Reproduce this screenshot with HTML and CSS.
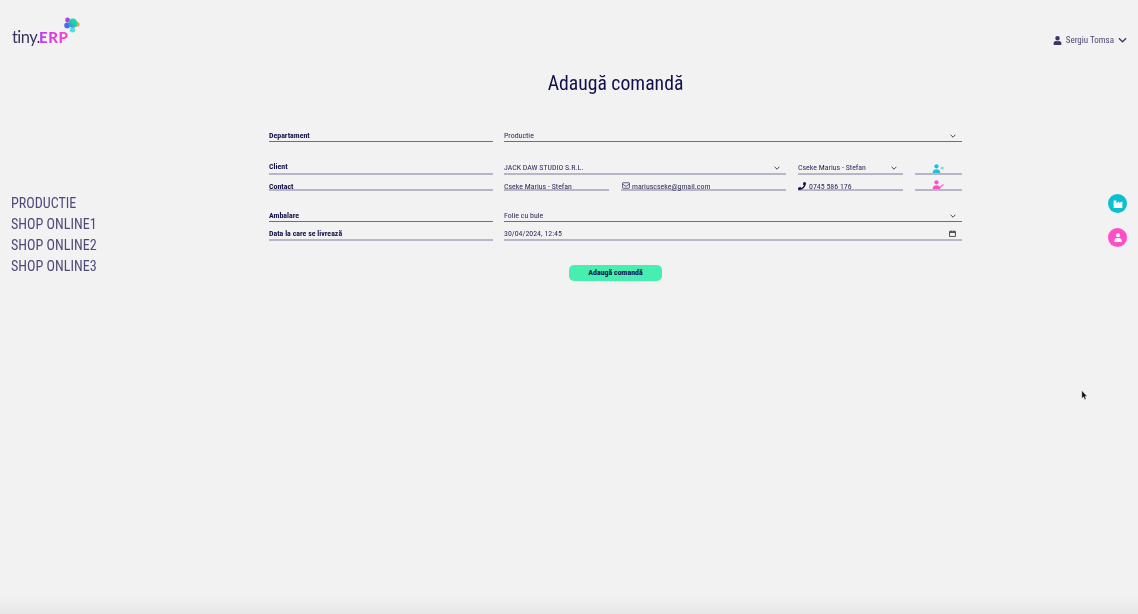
FILE: index.html
```html
<!DOCTYPE html>
<html lang="ro">
<head>
<meta charset="utf-8">
<title>Adaugă comandă</title>
<link rel="stylesheet" href="styles.css">
</head>
<body>
<div class="page">
  <header class="topbar">
    <div class="logo">
      <span class="logo-tiny">tiny.</span><span class="logo-erp">ERP</span>
      <svg class="logo-mark" viewBox="0 0 18 18" aria-hidden="true">
        <defs>
          <linearGradient id="lg" x1="0" y1="1" x2="1" y2="0">
            <stop offset="0" stop-color="#3f7fe8"/>
            <stop offset="0.55" stop-color="#1fd0b0"/>
            <stop offset="1" stop-color="#2bdc96"/>
          </linearGradient>
        </defs>
        <circle cx="4" cy="3.4" r="2.7" fill="#b23fe0"/>
        <circle cx="15" cy="8.5" r="2.6" fill="#f59a4a"/>
        <circle cx="9.5" cy="14.4" r="3" fill="#55dbe0"/>
        <circle cx="3.5" cy="9.5" r="3.2" fill="#4d6ce8"/>
        <circle cx="10" cy="7" r="5.2" fill="url(#lg)"/>
      </svg>
    </div>
    <div class="user">
      <svg class="user-icon" viewBox="0 0 448 512" aria-hidden="true"><path d="M224 256a128 128 0 1 0 0-256 128 128 0 0 0 0 256zm90 32h-17a174 174 0 0 1-146 0h-17C60 288 0 348 0 422v42c0 26 22 48 48 48h352c26 0 48-22 48-48v-42c0-74-60-134-134-134z"/></svg>
      <span>Sergiu Tomsa</span>
      <svg class="user-chev" viewBox="0 0 10 6" aria-hidden="true"><path d="M1 1l4 4 4-4"/></svg>
    </div>
  </header>

  <div class="content">
    <nav class="side">
      <a>PRODUCTIE</a>
      <a>SHOP ONLINE1</a>
      <a>SHOP ONLINE2</a>
      <a>SHOP ONLINE3</a>
    </nav>

    <main class="main">
      <h1>Adaugă comandă</h1>
      <form class="form">
        <div class="row row-dept">
          <div class="label line-dark">Departament</div>
          <div class="field line-dark grow"><span>Productie</span><svg class="chev" viewBox="0 0 10 6"><path d="M1 1l4 4 4-4"/></svg></div>
        </div>

        <div class="row row-client">
          <div class="label line-soft">Client</div>
          <div class="cells">
            <div class="field line-soft c-a"><span>JACK DAW STUDIO S.R.L.</span><svg class="chev" viewBox="0 0 10 6"><path d="M1 1l4 4 4-4"/></svg></div>
            <div class="field line-soft c-b"><span>Cseke Marius - Stefan</span><svg class="chev" viewBox="0 0 10 6"><path d="M1 1l4 4 4-4"/></svg></div>
            <div class="field line-soft c-c">
              <svg class="act" viewBox="0 0 16 11"><circle cx="5.5" cy="2.8" r="2.6" fill="#22bfd6"/><path d="M0.8 11c0-3 1.6-4.6 4.7-4.6s4.7 1.6 4.7 4.6z" fill="#22bfd6"/><circle cx="12.6" cy="5" r="1.9" fill="#7fdde9"/></svg>
            </div>
          </div>
        </div>

        <div class="row row-contact">
          <div class="label line-soft">Contact</div>
          <div class="cells">
            <div class="split">
              <div class="field line-soft c-name"><span>Cseke Marius - Stefan</span></div>
              <div class="field line-soft c-mail">
                <svg class="ico-mail" viewBox="0 0 12 10"><rect x="0.6" y="0.9" width="10.8" height="8.2" rx="1" /><path d="M0.8 2.8L6 6.4l5.2-3.6"/></svg>
                <span>mariuscseke@gmail.com</span>
              </div>
            </div>
            <div class="field line-soft c-b">
              <svg class="ico-phone" viewBox="0 0 512 512"><path d="M493 24L389 0c-11-3-23 3-27 14l-48 112c-4 10-1 21 7 28l61 50a371 371 0 0 1-177 177l-50-61c-7-8-18-11-28-7L15 361C3 366-3 378 0 389l24 104c3 11 12 19 24 19 256 0 464-207 464-464 0-11-8-21-19-24z"/></svg>
              <span>0745 586 176</span>
            </div>
            <div class="field line-soft c-c">
              <svg class="act" viewBox="0 0 16 11"><circle cx="5.5" cy="2.8" r="2.6" fill="#ff4fc8"/><path d="M0.8 11c0-3 1.6-4.6 4.7-4.6s4.7 1.6 4.7 4.6z" fill="#ff4fc8"/><path d="M9 10l5-4.6" stroke="#ff4fc8" stroke-width="1.5" fill="none"/></svg>
            </div>
          </div>
        </div>

        <div class="row row-pack">
          <div class="label line-dark">Ambalare</div>
          <div class="field line-dark grow"><span>Folie cu bule</span><svg class="chev" viewBox="0 0 10 6"><path d="M1 1l4 4 4-4"/></svg></div>
        </div>

        <div class="row row-date">
          <div class="label line-soft">Data la care se livrează</div>
          <div class="field line-soft grow"><span>30/04/2024, 12:45</span>
            <svg class="cal" viewBox="0 0 10 10"><path d="M0.8 2h8.4v7.2H0.8zM0.8 3.6h8.4" /><path d="M3 .6v1.4M7 .6v1.4"/></svg>
          </div>
        </div>

        <div class="actions"><button type="button" class="submit">Adaugă comandă</button></div>
      </form>
    </main>

    <aside class="rail">
      <span class="bubble teal">
        <svg viewBox="0 0 12 10"><path d="M0.5 10V0.5h3.4v3.4L7.4 1.8v2.1L11.5 1.8V10z" fill="#fff"/></svg>
      </span>
      <span class="bubble pink">
        <svg viewBox="0 0 10 11"><circle cx="5" cy="2.6" r="2.5" fill="#fff"/><path d="M0.6 11V9c0-2 1.6-3 4.4-3s4.4 1 4.4 3v2z" fill="#fff"/></svg>
      </span>
    </aside>
  </div>
</div>
<svg class="cursor" viewBox="0 0 8 12" aria-hidden="true"><path d="M1 0.5v8.5l2-1.7 1.2 3.2 1.4-.5-1.2-3.1h2.4z"/></svg>
</body>
</html>
```

FILE: styles.css
```css
* { box-sizing: border-box; }

html, body {
  margin: 0;
  height: 100%;
  overflow: hidden;
}

body {
  background: linear-gradient(to bottom, #f2f2f2 0, #f2f2f2 596px, #e6e6e6 614px);
  color: #10104a;
  font-family: Roboto, "Liberation Sans", sans-serif;
  font-stretch: condensed;
}

.page {
  height: 614px;
  display: flex;
  flex-direction: column;
  filter: blur(0.3px);
}

.topbar {
  height: 70px;
  display: flex;
  justify-content: space-between;
  align-items: flex-start;
  padding: 0 11px 0 12px;
}

.logo {
  position: relative;
  margin-top: 29px;
  line-height: 17px;
  white-space: nowrap;
}

.logo-tiny {
  color: #3b3560;
  font-family: Lato, sans-serif;
  font-size: 16.5px;
  letter-spacing: -0.55px;
}

.logo-erp {
  font-family: Lato, sans-serif;
  font-size: 15px;
  font-weight: 900;
  letter-spacing: 0.6px;
  margin-left: -1px;
  background: linear-gradient(to right, #b93cf5, #ff45c0);
  -webkit-background-clip: text;
  background-clip: text;
  -webkit-text-fill-color: transparent;
}

.logo-mark {
  position: absolute;
  left: 52px;
  top: -13px;
  width: 16px;
  height: 18px;
}

.user {
  margin-top: 33px;
  display: flex;
  align-items: center;
  color: #4e4a78;
  font-size: 9px;
  line-height: 14px;
}

.user-icon {
  width: 9px;
  height: 9px;
  margin-right: 4px;
  fill: #3a3666;
}

.user-chev {
  width: 9px;
  height: 6px;
  margin-left: 4px;
  fill: none;
  stroke: #3a3666;
  stroke-width: 1.4;
}

.content {
  flex: 1;
  display: grid;
  grid-template-columns: 269px 693px 1fr;
}

.side {
  padding: 123px 0 0 11px;
  display: flex;
  flex-direction: column;
  color: #4e4a78;
  font-size: 14.1px;
  line-height: 21px;
}

.main h1 {
  margin: 0;
  height: 58px;
  padding-top: 2px;
  text-align: center;
  font-size: 19.7px;
  line-height: 24px;
  font-weight: 400;
  color: #10104a;
}

.form {
  display: flex;
  flex-direction: column;
  font-size: 7.9px;
}

.row {
  display: flex;
  gap: 11px;
  align-items: stretch;
}

.row-dept { height: 14px; }
.row-client { height: 19px; margin-top: 14px; }
.row-contact { height: 16px; }
.row-pack { height: 16px; margin-top: 15px; }
.row-date { height: 19px; }

.label {
  width: 224px;
  flex: none;
  font-weight: 700;
  color: #10104a;
  display: flex;
  align-items: flex-end;
  line-height: 10px;
}

.row-client .label { padding-bottom: 1px; }

.line-dark { border-bottom: 1px solid #6d6a8c; }
.line-soft { border-bottom: 2px solid #b7b5c6; }

.field {
  display: flex;
  align-items: flex-end;
  justify-content: space-between;
  color: #2e2b5c;
  line-height: 10px;
  white-space: nowrap;
}

.row-contact .label,
.row-contact .field {
  line-height: 4px;
}

.grow { flex: 1; padding-right: 6px; }

.cells {
  flex: 1;
  display: flex;
  gap: 12px;
}

.c-a, .split { width: 282px; flex: none; }
.c-a { padding-right: 6px; }
.c-b { width: 105px; flex: none; padding-right: 6px; justify-content: flex-start; gap: 3px; }
.row-client .c-b { justify-content: space-between; }
.c-c { flex: 1; justify-content: center; }

.split {
  display: flex;
  gap: 12px;
}

.c-name { width: 105px; flex: none; }
.c-mail { flex: 1; justify-content: flex-start; gap: 2px; padding-left: 1px; }

.chev {
  width: 6px;
  height: 4px;
  margin-bottom: 3px;
  fill: none;
  stroke: #2e2b5c;
  stroke-width: 1.5;
}

.act { width: 13px; height: 9px; }

.ico-mail {
  width: 8px;
  height: 7px;
  fill: none;
  stroke: #10104a;
  stroke-width: 1;
}

.ico-phone {
  width: 8px;
  height: 8px;
  margin-bottom: -1px;
  fill: #10104a;
}

.cal {
  width: 7px;
  height: 7px;
  margin-bottom: 2px;
  fill: none;
  stroke: #222;
  stroke-width: 1.1;
}

.actions {
  display: flex;
  justify-content: center;
  margin-top: 24px;
}

.submit {
  width: 93px;
  height: 16px;
  padding: 0;
  border: 0;
  border-radius: 5px;
  background: #46efb0;
  color: #10104a;
  font: 700 7.9px/16px Roboto, "Liberation Sans", sans-serif;
  font-stretch: condensed;
}

.rail {
  padding: 124px 0 0 146px;
  display: flex;
  flex-direction: column;
  gap: 15px;
}

.bubble {
  width: 19px;
  height: 19px;
  border-radius: 50%;
  display: flex;
  align-items: center;
  justify-content: center;
}

.teal { background: #0abfd0; }
.pink { background: #ff4fc8; }
.teal svg { width: 10px; height: 8px; }
.pink svg { width: 8px; height: 9px; }

.cursor {
  position: fixed;
  left: 1081px;
  top: 390px;
  width: 7px;
  height: 11px;
  fill: #111;
  stroke: #ddd;
  stroke-width: 0.4;
}
```
